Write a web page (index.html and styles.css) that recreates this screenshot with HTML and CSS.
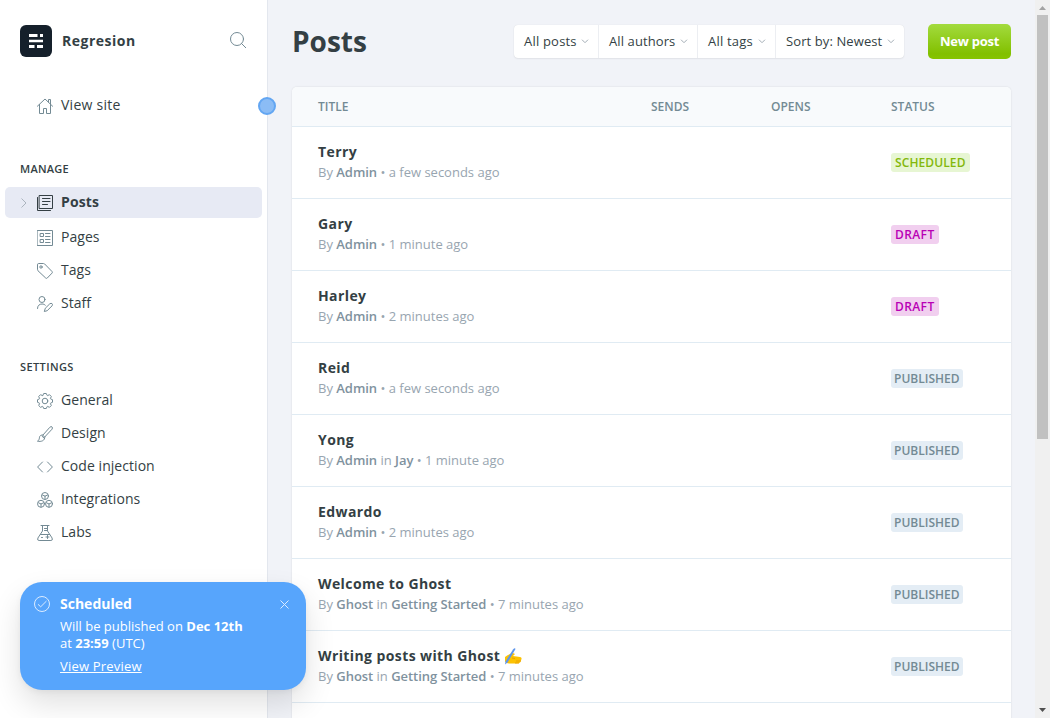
FILE: index.html
```html
<!DOCTYPE html>
<html lang="en">
<head>
<meta charset="utf-8">
<title>Posts - Regresion</title>
<link rel="stylesheet" href="styles.css">
</head>
<body>
<div class="app">
  <aside class="sidebar">
    <header class="brand">
      <svg class="logo" viewBox="0 0 32 32"><rect width="32" height="32" rx="6" fill="#15202b"/><path d="M9 9h8.500v3H9zM20 9h3v3h-3zM9 14.700h14v2.600H9zM9 20h5.500v3H9zM17 20h6v3h-6z" fill="#fff"/></svg>
      <span class="brand-name">Regresion</span>
      <svg class="icon search" viewBox="0 0 16 16"><circle cx="7" cy="7" r="6.500"/><path d="M11.500 11.500l4.300 4.300"/></svg>
    </header>
    <nav class="nav">
      <a class="item view-site"><svg class="icon" viewBox="0 0 16 16"><path d="M.4 8.200L8 1l7.600 7.200M2.500 6.500v9h4v-5h3v5h4v-9M11.500 4V1.500h2V6"/></svg><span>View site</span></a>
      <h2 class="label">Manage</h2>
      <a class="item active"><svg class="chevron" viewBox="0 0 6 10"><path d="M.5.500L5 5 .5 9.500"/></svg><svg class="icon" viewBox="0 0 16 16"><path d="M2.500.500h13v13h-13zM.5 2.500v13h13M5.500 3.500h7.500M5.500 6.500h7.500M5.500 9.500h5"/></svg><span>Posts</span></a>
      <a class="item"><svg class="icon" viewBox="0 0 16 16"><path d="M.5.500h15v15H.5zM3.500 3.500h3v3h-3zM3.500 9.500h3v3h-3zM8.500 3.500H13M8.500 6.500H13M8.500 9.500H13M8.500 12.500H13"/></svg><span>Pages</span></a>
      <a class="item"><svg class="icon" viewBox="0 0 16 16"><path d="M.5 1.500q0-1 1-1h5q.7 0 1.200.5l7.300 7.500q.8.800 0 1.600l-4.700 4.900q-.8.800-1.600 0L1 7.800q-.5-.5-.5-1.200z"/><circle cx="4" cy="4" r="1.200"/></svg><span>Tags</span></a>
      <a class="item"><svg class="icon" viewBox="0 0 16 16"><circle cx="5" cy="3.500" r="3"/><path d="M.5 12.500c0-3 2-4.500 4.500-4.500 1.500 0 2.500.4 3.300 1.200M13 7.700q1.200-.9 2.100 0t0 2.100l-4.900 4.900-2.900.8.900-2.900z"/></svg><span>Staff</span></a>
      <h2 class="label settings">Settings</h2>
      <a class="item"><svg class="icon" viewBox="0 0 16 16"><circle cx="8" cy="8" r="2.800"/><path d="M5.900 2.400L6.700.5H9.300L10.100 2.400 10.500 2.600 12.500 1.700 14.300 3.500 13.400 5.500 13.600 5.900 15.500 6.700V9.300L13.600 10.100 13.400 10.500 14.300 12.500 12.500 14.300 10.500 13.400 10.100 13.600 9.300 15.500H6.700L5.900 13.600 5.500 13.400 3.500 14.300 1.700 12.500 2.600 10.500 2.400 10.100.5 9.300V6.700L2.400 5.900 2.600 5.500 1.700 3.500 3.500 1.700 5.500 2.600z"/></svg><span>General</span></a>
      <a class="item"><svg class="icon" viewBox="0 0 16 16"><path d="M6 9L12.800 1.300q1.200-1.200 2.200-.4t0 2.300L7.900 10.800zM6 9c-2-.3-3.500.7-3.600 2.800-.1 1.500-.6 2.600-1.900 3.400 3.600.7 7.400-.2 7.400-4.400M5 10.200l1.800 1.700"/></svg><span>Design</span></a>
      <a class="item"><svg class="icon" viewBox="0 0 16 16"><path d="M5.500 3L.6 8l4.900 5M10.500 3l4.900 5-4.900 5"/></svg><span>Code injection</span></a>
      <a class="item"><svg class="icon" viewBox="0 0 16 16"><circle cx="8" cy="4" r="3.500"/><circle cx="4" cy="11.800" r="3.500"/><circle cx="12" cy="11.800" r="3.500"/><path d="M5.500 3L8 4.200 10.500 3M8 4.200v3M1.500 10.800L4 12l2.500-1.200M4 12v3M9.500 10.800L12 12l2.500-1.200M12 12v3"/></svg><span>Integrations</span></a>
      <a class="item"><svg class="icon" viewBox="0 0 16 16"><path d="M4 .5h8M5.500.5V6L.9 13q-1 2.500 1.200 2.500h11.800q2.200 0 1.200-2.500L10.500 6V.5M7.500 3.500h3M7.500 5.500h3M3.500 9.500h9M4.500 12.500h1M10.500 10.500v3M9 12h3"/></svg><span>Labs</span></a>
    </nav>
    <span class="handle"></span>
  </aside>

  <main class="main">
    <header class="topbar">
      <h1 class="heading">Posts</h1>
      <div class="filters">
        <button class="filter f1"><span>All posts</span><svg class="caret" viewBox="0 0 8 5"><path d="M1 .7l3 3 3-3"/></svg></button>
        <button class="filter f2"><span>All authors</span><svg class="caret" viewBox="0 0 8 5"><path d="M1 .7l3 3 3-3"/></svg></button>
        <button class="filter f3"><span>All tags</span><svg class="caret" viewBox="0 0 8 5"><path d="M1 .7l3 3 3-3"/></svg></button>
        <button class="filter f4"><span>Sort by: Newest</span><svg class="caret" viewBox="0 0 8 5"><path d="M1 .7l3 3 3-3"/></svg></button>
      </div>
      <button class="new-post">New post</button>
    </header>
    <section class="list">
      <div class="row head"><span>Title</span><span>Sends</span><span>Opens</span><span>Status</span></div>
      <div class="row"><div class="post"><h3 class="title">Terry</h3><p class="meta">By <b>Admin</b> • a few seconds ago</p></div><div class="status"><span class="badge scheduled">Scheduled</span></div></div>
      <div class="row"><div class="post"><h3 class="title">Gary</h3><p class="meta">By <b>Admin</b> • 1 minute ago</p></div><div class="status"><span class="badge draft">Draft</span></div></div>
      <div class="row"><div class="post"><h3 class="title">Harley</h3><p class="meta">By <b>Admin</b> • 2 minutes ago</p></div><div class="status"><span class="badge draft">Draft</span></div></div>
      <div class="row"><div class="post"><h3 class="title">Reid</h3><p class="meta">By <b>Admin</b> • a few seconds ago</p></div><div class="status"><span class="badge">Published</span></div></div>
      <div class="row"><div class="post"><h3 class="title">Yong</h3><p class="meta">By <b>Admin</b> in <b>Jay</b> • 1 minute ago</p></div><div class="status"><span class="badge">Published</span></div></div>
      <div class="row"><div class="post"><h3 class="title">Edwardo</h3><p class="meta">By <b>Admin</b> • 2 minutes ago</p></div><div class="status"><span class="badge">Published</span></div></div>
      <div class="row"><div class="post"><h3 class="title">Welcome to Ghost</h3><p class="meta">By <b>Ghost</b> in <b>Getting Started</b> • 7 minutes ago</p></div><div class="status"><span class="badge">Published</span></div></div>
      <div class="row"><div class="post"><h3 class="title">Writing posts with Ghost <svg class="hand" viewBox="0 0 18 17"><path d="M1 9q4-3 8-4l2 1-2 2 7 1q2 .5 1.500 2t-1 3q-1 1.500-4 1.500H5q-3 0-4-2z" fill="#fcc203"/><path d="M8 10l3 .5M12 13h5M11 15h4" stroke="#e59a00" stroke-width=".8" fill="none"/><path d="M9 1.500q2-2 2.500-.5L3.500 14.500 1 16.500l.5-3z" fill="#5e96ec"/></svg></h3><p class="meta">By <b>Ghost</b> in <b>Getting Started</b> • 7 minutes ago</p></div><div class="status"><span class="badge">Published</span></div></div>
      <div class="row"></div>
    </section>
  </main>

  <div class="scrollbar">
    <svg class="arrow" viewBox="0 0 15 15"><path d="M4 10l3.500-4L11 10z" fill="#a3a3a3"/></svg>
    <span class="thumb"></span>
    <svg class="arrow" viewBox="0 0 15 15"><path d="M4 5l3.500 4L11 5z" fill="#505050"/></svg>
  </div>

  <div class="toast">
    <svg class="check" viewBox="0 0 16 16"><circle cx="8" cy="8" r="7.500"/><path d="M4 8.300l2.700 2.500L12.500 5"/></svg>
    <div class="toast-body">
      <strong class="toast-title">Scheduled</strong>
      <p class="toast-text">Will be published on <b>Dec 12th</b><br>at <b>23:59</b> (UTC)</p>
      <a class="toast-link">View Preview</a>
    </div>
    <svg class="close" viewBox="0 0 9 9"><path d="M.5.500l8 8M8.500.500l-8 8"/></svg>
  </div>
</div>
</body>
</html>
```
FILE: styles.css
```css
* { box-sizing: border-box; }
body { margin: 0; font-family: "Open Sans", "Noto Sans", sans-serif; color: #343f44; }
h1, h2, h3, p { margin: 0; }
button { font: inherit; color: inherit; border: 0; margin: 0; }
svg { flex: none; display: block; }
.app { position: relative; display: flex; height: 718px; width: 1050px; overflow: hidden; background: #f1f3f8; }

.sidebar { position: relative; width: 268px; flex: none; background: #fff; border-right: 1px solid #e3e7ee; }
.brand { display: flex; align-items: center; height: 32px; margin: 25px 21px 0 20px; }
.logo { width: 32px; height: 32px; margin-right: 10px; }
.brand-name { flex: 1; padding-bottom: 2px; font-size: 14px; font-weight: 700; letter-spacing: 0.5px; }
.icon { width: 16px; height: 16px; fill: none; stroke: #738a94; stroke-width: 1; stroke-linejoin: round; stroke-linecap: round; }
.search { margin-bottom: 2px; }
.nav { padding: 32px 5px 0; }
.item { display: flex; align-items: center; gap: 8px; height: 33px; padding-left: 32px; font-size: 14px; line-height: 20px; letter-spacing: 0.05px; color: #343f44; }
.item span { padding-bottom: 2px; }
.item .icon { margin-top: 1px; }
.view-site { letter-spacing: 0.25px; }
.label { margin: 39px 0 10px 15px; height: 16px; font-size: 11px; line-height: 16px; font-weight: 600; letter-spacing: 0.25px; text-transform: uppercase; }
.label.settings { margin: 39px 0 9px 15px; letter-spacing: 0.4px; }
.active { height: 31px; margin-bottom: 3px; padding-left: 16px; border-radius: 5px; background: #e7eaf4; font-weight: 700; letter-spacing: 0.1px; }
.active .icon { stroke: #343f44; }
.chevron { width: 6px; height: 10px; margin-right: 2px; fill: none; stroke: #abb4be; }
.handle { position: absolute; left: 258px; top: 97px; width: 18px; height: 18px; border-radius: 50%; background: #8bbcf5; border: 2px solid #63a6f2; z-index: 2; }

.main { flex: 1; padding: 0 24px; min-width: 0; }
.topbar { display: flex; align-items: center; height: 83px; }
.heading { flex: 1; padding-bottom: 2px; font-size: 28px; line-height: 36px; font-weight: 700; }
.filters { display: flex; width: 390px; height: 33px; margin-right: 24px; border-radius: 4px; background: #fff; box-shadow: 0 0 1px rgba(0,0,0,.12), 0 1px 2px rgba(0,0,0,.06); }
.filter { display: flex; align-items: center; justify-content: space-between; padding: 0 10px; background: none; border-right: 1px solid #eceef2; font-size: 13px; line-height: 18px; letter-spacing: 0.1px; white-space: nowrap; }
.filter span { padding-bottom: 2px; }
.filter:last-child { border-right: 0; }
.f1 { width: 85px; letter-spacing: 0.2px; }
.f2 { width: 99px; }
.f3 { width: 78px; letter-spacing: 0.2px; }
.f4 { width: 128px; }
.caret { width: 8px; height: 5px; margin-right: -1px; fill: none; stroke: #a3adb5; }
.new-post { width: 83px; height: 35px; padding: 0 0 2px; border-radius: 5px; background: linear-gradient(#a3db3e, #82c000 85%, #86c400); color: #fff; font-size: 13px; font-weight: 700; letter-spacing: -0.25px; }

.list { margin-top: 4px; border-radius: 5px 5px 0 0; background: #fff; box-shadow: 0 0 2px rgba(0,0,0,.12); overflow: hidden; }
.row { display: grid; grid-template-columns: 1fr 120px 120px 120px; align-items: center; height: 72px; padding-left: 26px; border-bottom: 1px solid #e0ebf3; }
.head { height: 40px; background: #f8fafc; color: #738a94; font-size: 12px; font-weight: 600; text-transform: uppercase; }
.post { padding-bottom: 2px; }
.title { height: 20px; line-height: 20px; font-size: 14px; font-weight: 700; letter-spacing: 0.4px; white-space: nowrap; }
.meta { height: 20px; line-height: 20px; font-size: 13px; color: #98a5b0; white-space: nowrap; }
.meta b { font-weight: 600; color: #7f929e; letter-spacing: -0.05px; }
.hand { display: inline-block; width: 18px; height: 17px; vertical-align: -4px; }
.status { grid-column: 4; display: flex; }
.badge { height: 19px; padding: 0 3px; border-radius: 3px; line-height: 19px; font-size: 12px; font-weight: 600; text-transform: uppercase; background: #e4edf5; color: #738a94; }
.scheduled { padding: 0 4px; letter-spacing: 0.1px; background: #e7f6d3; color: #83b80b; }
.draft { padding: 0 4px; letter-spacing: 0.4px; background: #f1cfef; color: #b900b5; }

.scrollbar { width: 15px; flex: none; display: flex; flex-direction: column; background: #f0f0f0; }
.arrow { width: 15px; height: 15px; }
.thumb { width: 11px; height: 424px; margin: 0 2px auto; background: #c1c1c1; }

.toast { position: absolute; left: 20px; top: 582px; z-index: 3; display: flex; width: 286px; height: 108px; padding: 12px 17px 0 14px; border-radius: 22px; background: #57a5fc; color: #fff; box-shadow: 0 14px 30px rgba(0,0,0,.12), 0 2px 6px rgba(0,0,0,.05); }
.check { width: 16px; height: 16px; margin: 2px 10px 0 0; fill: none; stroke: #dcecff; }
.toast-body { flex: 1; font-size: 13px; }
.toast-title { display: block; font-size: 14px; line-height: 20px; }
.toast-text { margin-top: 4px; line-height: 17px; letter-spacing: 0; }
.toast-link { display: block; margin-top: 5px; line-height: 18px; letter-spacing: 0.2px; text-decoration: underline; }
.close { width: 9px; height: 9px; margin-top: 6px; fill: none; stroke: #dcecff; }
```
